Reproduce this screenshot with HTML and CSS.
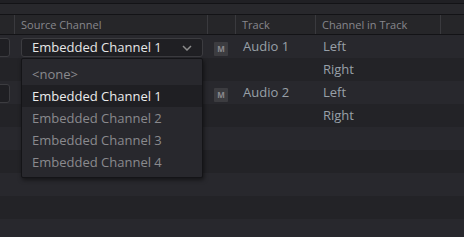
FILE: index.html
```html
<!DOCTYPE html>
<html lang="en">
<head>
    <meta charset="UTF-8">
    <title>Audio Channel Mapping</title>
    <link rel="stylesheet" href="styles.css">
</head>
<body>
<div class="topbar"></div>
<div class="subbar"></div>
<div class="grid head">
    <div class="cell"></div>
    <div class="cell">Source Channel</div>
    <div class="cell"></div>
    <div class="cell">Track</div>
    <div class="cell">Channel in Track</div>
    <div class="cell last"></div>
</div>
<div id="rows"></div>

<div class="menu">
    <div class="item">&lt;none&gt;</div>
    <div class="item active">Embedded Channel 1</div>
    <div class="item">Embedded Channel 2</div>
    <div class="item">Embedded Channel 3</div>
    <div class="item">Embedded Channel 4</div>
</div>

<script>
    var rows=[
        {combo:true, src:'Embedded Channel 1', mute:true, track:'Audio 1', ch:'Left'},
        {ch:'Right'},
        {combo:true, src:'', mute:true, track:'Audio 2', ch:'Left'},
        {ch:'Right'},
        {},{},{},{},{}
    ];
    var html=rows.map(function(r,i){
        var src=r.src ? `<div class="combo">${r.src}<svg class="chev" width="10" height="6" viewBox="0 0 10 6"><path d="M1 1 L5 5 L9 1" fill="none" stroke="#8c8c8c" stroke-width="1.5"/></svg></div>` : '';
        return `
        <div class="grid row ${i%2?'even':'odd'}">
            <div class="cell">${r.combo?'<div class="stub"></div>':''}</div>
            <div class="cell">${src}</div>
            <div class="cell">${r.mute?'<span class="mute">M</span>':''}</div>
            <div class="cell txt">${r.track||''}</div>
            <div class="cell txt">${r.ch||''}</div>
            <div class="cell"></div>
        </div>`;
    });
    document.getElementById('rows').innerHTML=html.join('\n');
</script>
</body>
</html>
```

FILE: styles.css
```css
body{
    margin: 0;
    background: #242428;
    font-family: "Open Sans", "Liberation Sans", sans-serif;
    overflow: hidden;
    height: 237px;
}
.topbar{
    height: 3px;
    background: #202024;
    border-bottom: 1px solid #131316;
}
.subbar{
    height: 10px;
    background: #28282c;
    border-bottom: 1px solid #131316;
}
.grid{
    display: grid;
    grid-template-columns: 15px 193px 28px 80px 125px 1fr;
}
.head{
    height: 19px;
    background: #262629;
    border-bottom: 1px solid #131316;
    font-size: 11px;
    color: #86868c;
}
.head .cell{
    border-right: 1px solid #3a3a3e;
    padding-left: 6px;
    line-height: 19px;
    margin: 0 0 0 0;
}
.head .cell:first-child{
    padding-left: 0;
    border-right-color: #3a3a3e;
}
.head .cell.last{
    border-right: 0;
}
.row{
    height: 23px;
}
.row.odd{
    background: #28282d;
}
.row.even{
    background: #232327;
}
.cell{
    box-sizing: border-box;
    overflow: hidden;
    white-space: nowrap;
}
.row .cell:nth-child(2){
    padding-left: 6px;
}
.row .cell:nth-child(3){
    padding-left: 6px;
}
.txt{
    padding-left: 7px;
    font-size: 13px;
    line-height: 23px;
    color: #98a0a8;
}
.stub{
    margin: 3px 0 0 -6px;
    width: 16px;
    height: 19px;
    box-sizing: border-box;
    border: 1px solid #3c3c40;
    border-radius: 3px;
    background: #1f1f23;
}
.combo{
    margin-top: 3px;
    width: 182px;
    height: 19px;
    box-sizing: border-box;
    border: 1px solid #3c3c40;
    border-radius: 3px;
    background: #1f1f23;
    color: #e6e6e6;
    font-size: 13px;
    line-height: 17px;
    padding-left: 10px;
    display: flex;
    align-items: center;
    justify-content: space-between;
    padding-right: 10px;
}
.chev{
    display: block;
}
.mute{
    display: inline-block;
    margin-top: 4px;
    width: 14px;
    height: 14px;
    background: #3c3c40;
    color: #8a8a8e;
    font-size: 8px;
    font-weight: bold;
    text-align: center;
    line-height: 14px;
    border-radius: 1px;
}
.menu{
    position: absolute;
    left: 21px;
    top: 58px;
    width: 182px;
    height: 120px;
    box-sizing: border-box;
    padding-top: 4px;
    background: #28282d;
    border: 1px solid #141417;
    border-radius: 2px;
    box-shadow: 1px 2px 4px rgba(0,0,0,0.5);
}
.item{
    height: 22px;
    line-height: 22px;
    padding-left: 10px;
    font-size: 13px;
    color: #8a8a8e;
}
.item.active{
    background: #1f1f23;
    color: #ececec;
}
```
